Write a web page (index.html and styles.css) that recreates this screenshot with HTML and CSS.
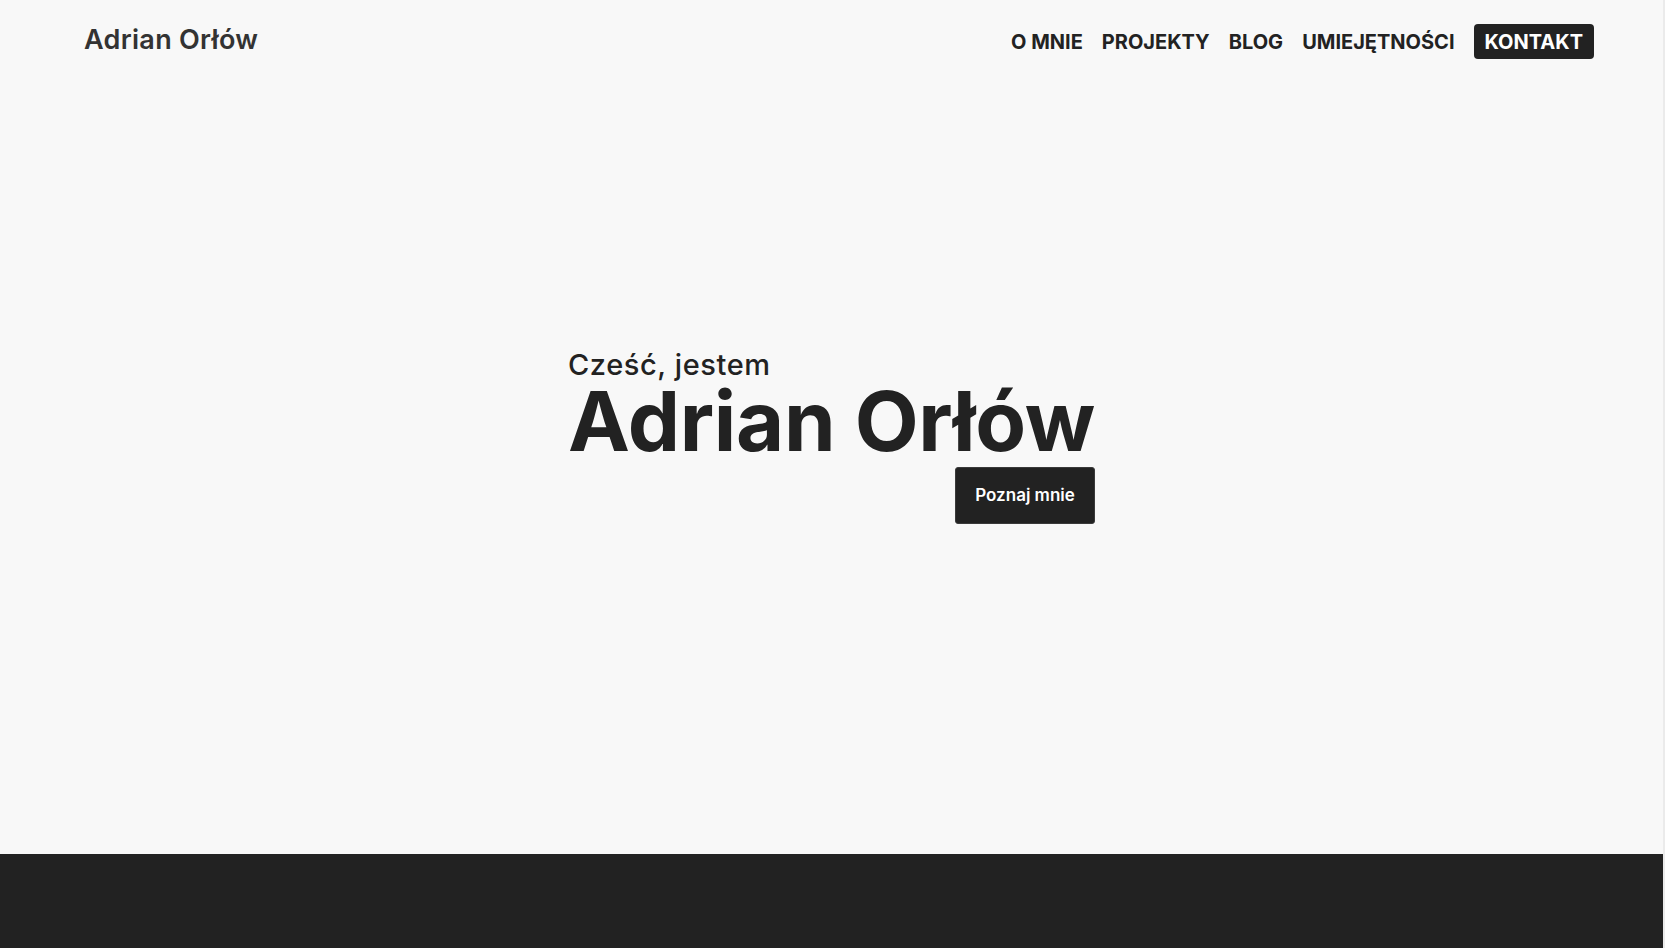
FILE: index.html
```html
<!DOCTYPE html>
<html lang="pl">
<head>
<meta charset="utf-8">
<title>Adrian Orłów</title>
<link rel="stylesheet" href="styles.css">
</head>
<body>
<div class="page">
  <header class="header">
    <a class="logo" href="#">Adrian Orłów</a>
    <nav class="nav">
      <a class="nav-link" href="#">O MNIE</a>
      <a class="nav-link" href="#">PROJEKTY</a>
      <a class="nav-link" href="#">BLOG</a>
      <a class="nav-link" href="#">UMIEJĘTNOŚCI</a>
      <a class="nav-link nav-cta" href="#">KONTAKT</a>
    </nav>
  </header>
  <section class="hero">
    <div class="hero-content">
      <p class="hero-intro">Cześć, jestem</p>
      <h1 class="hero-title">Adrian Orłów</h1>
      <a class="hero-btn" href="#">Poznaj mnie</a>
    </div>
  </section>
  <section class="dark"></section>
</div>
</body>
</html>
```
FILE: styles.css
```css
html {
  background: #ebebeb;
}
body {
  margin: 0 2px 0 0;
  font-family: Inter, "Liberation Sans", sans-serif;
  color: #222;
  overflow: hidden;
}
.page {
  background: #f8f8f8;
  height: 948px;
  display: flex;
  flex-direction: column;
}
a {
  text-decoration: none;
  color: inherit;
}
.header {
  height: 80px;
  padding: 0 69px 0 84px;
  display: flex;
  align-items: center;
  justify-content: space-between;
}
.logo {
  font-size: 27px;
  font-weight: 600;
  color: #333;
  letter-spacing: 0.3px;
  margin-top: -1px;
}
.nav {
  display: flex;
  align-items: center;
  gap: 19px;
  margin-top: 3px;
}
.nav-link {
  font-size: 20px;
  font-weight: 700;
  color: #222;
}
.nav-cta {
  background: #222;
  color: #fff;
  padding: 0 11px;
  border-radius: 4px;
  height: 35px;
  box-sizing: border-box;
  display: flex;
  align-items: center;
}
.hero {
  height: 774px;
  box-sizing: border-box;
  padding: 0 0 63px 0;
  display: flex;
  align-items: center;
  justify-content: center;
}
.hero-content {
  display: flex;
  flex-direction: column;
  align-items: flex-start;
}
.hero-intro {
  margin: 0;
  font-size: 29px;
  font-weight: 500;
  line-height: 34px;
  letter-spacing: 0.6px;
}
.hero-title {
  margin: 0;
  font-size: 83px;
  font-weight: 700;
  line-height: 79px;
  letter-spacing: -0.3px;
}
.hero-btn {
  align-self: flex-end;
  margin-top: 6px;
  width: 140px;
  height: 57px;
  box-sizing: border-box;
  background: #222;
  color: #fff;
  border: 1px solid #3a3a3a;
  border-radius: 3px;
  font-size: 17px;
  font-weight: 600;
  display: flex;
  align-items: center;
  justify-content: center;
}
.dark {
  flex: 1;
  background: #222;
}
```
